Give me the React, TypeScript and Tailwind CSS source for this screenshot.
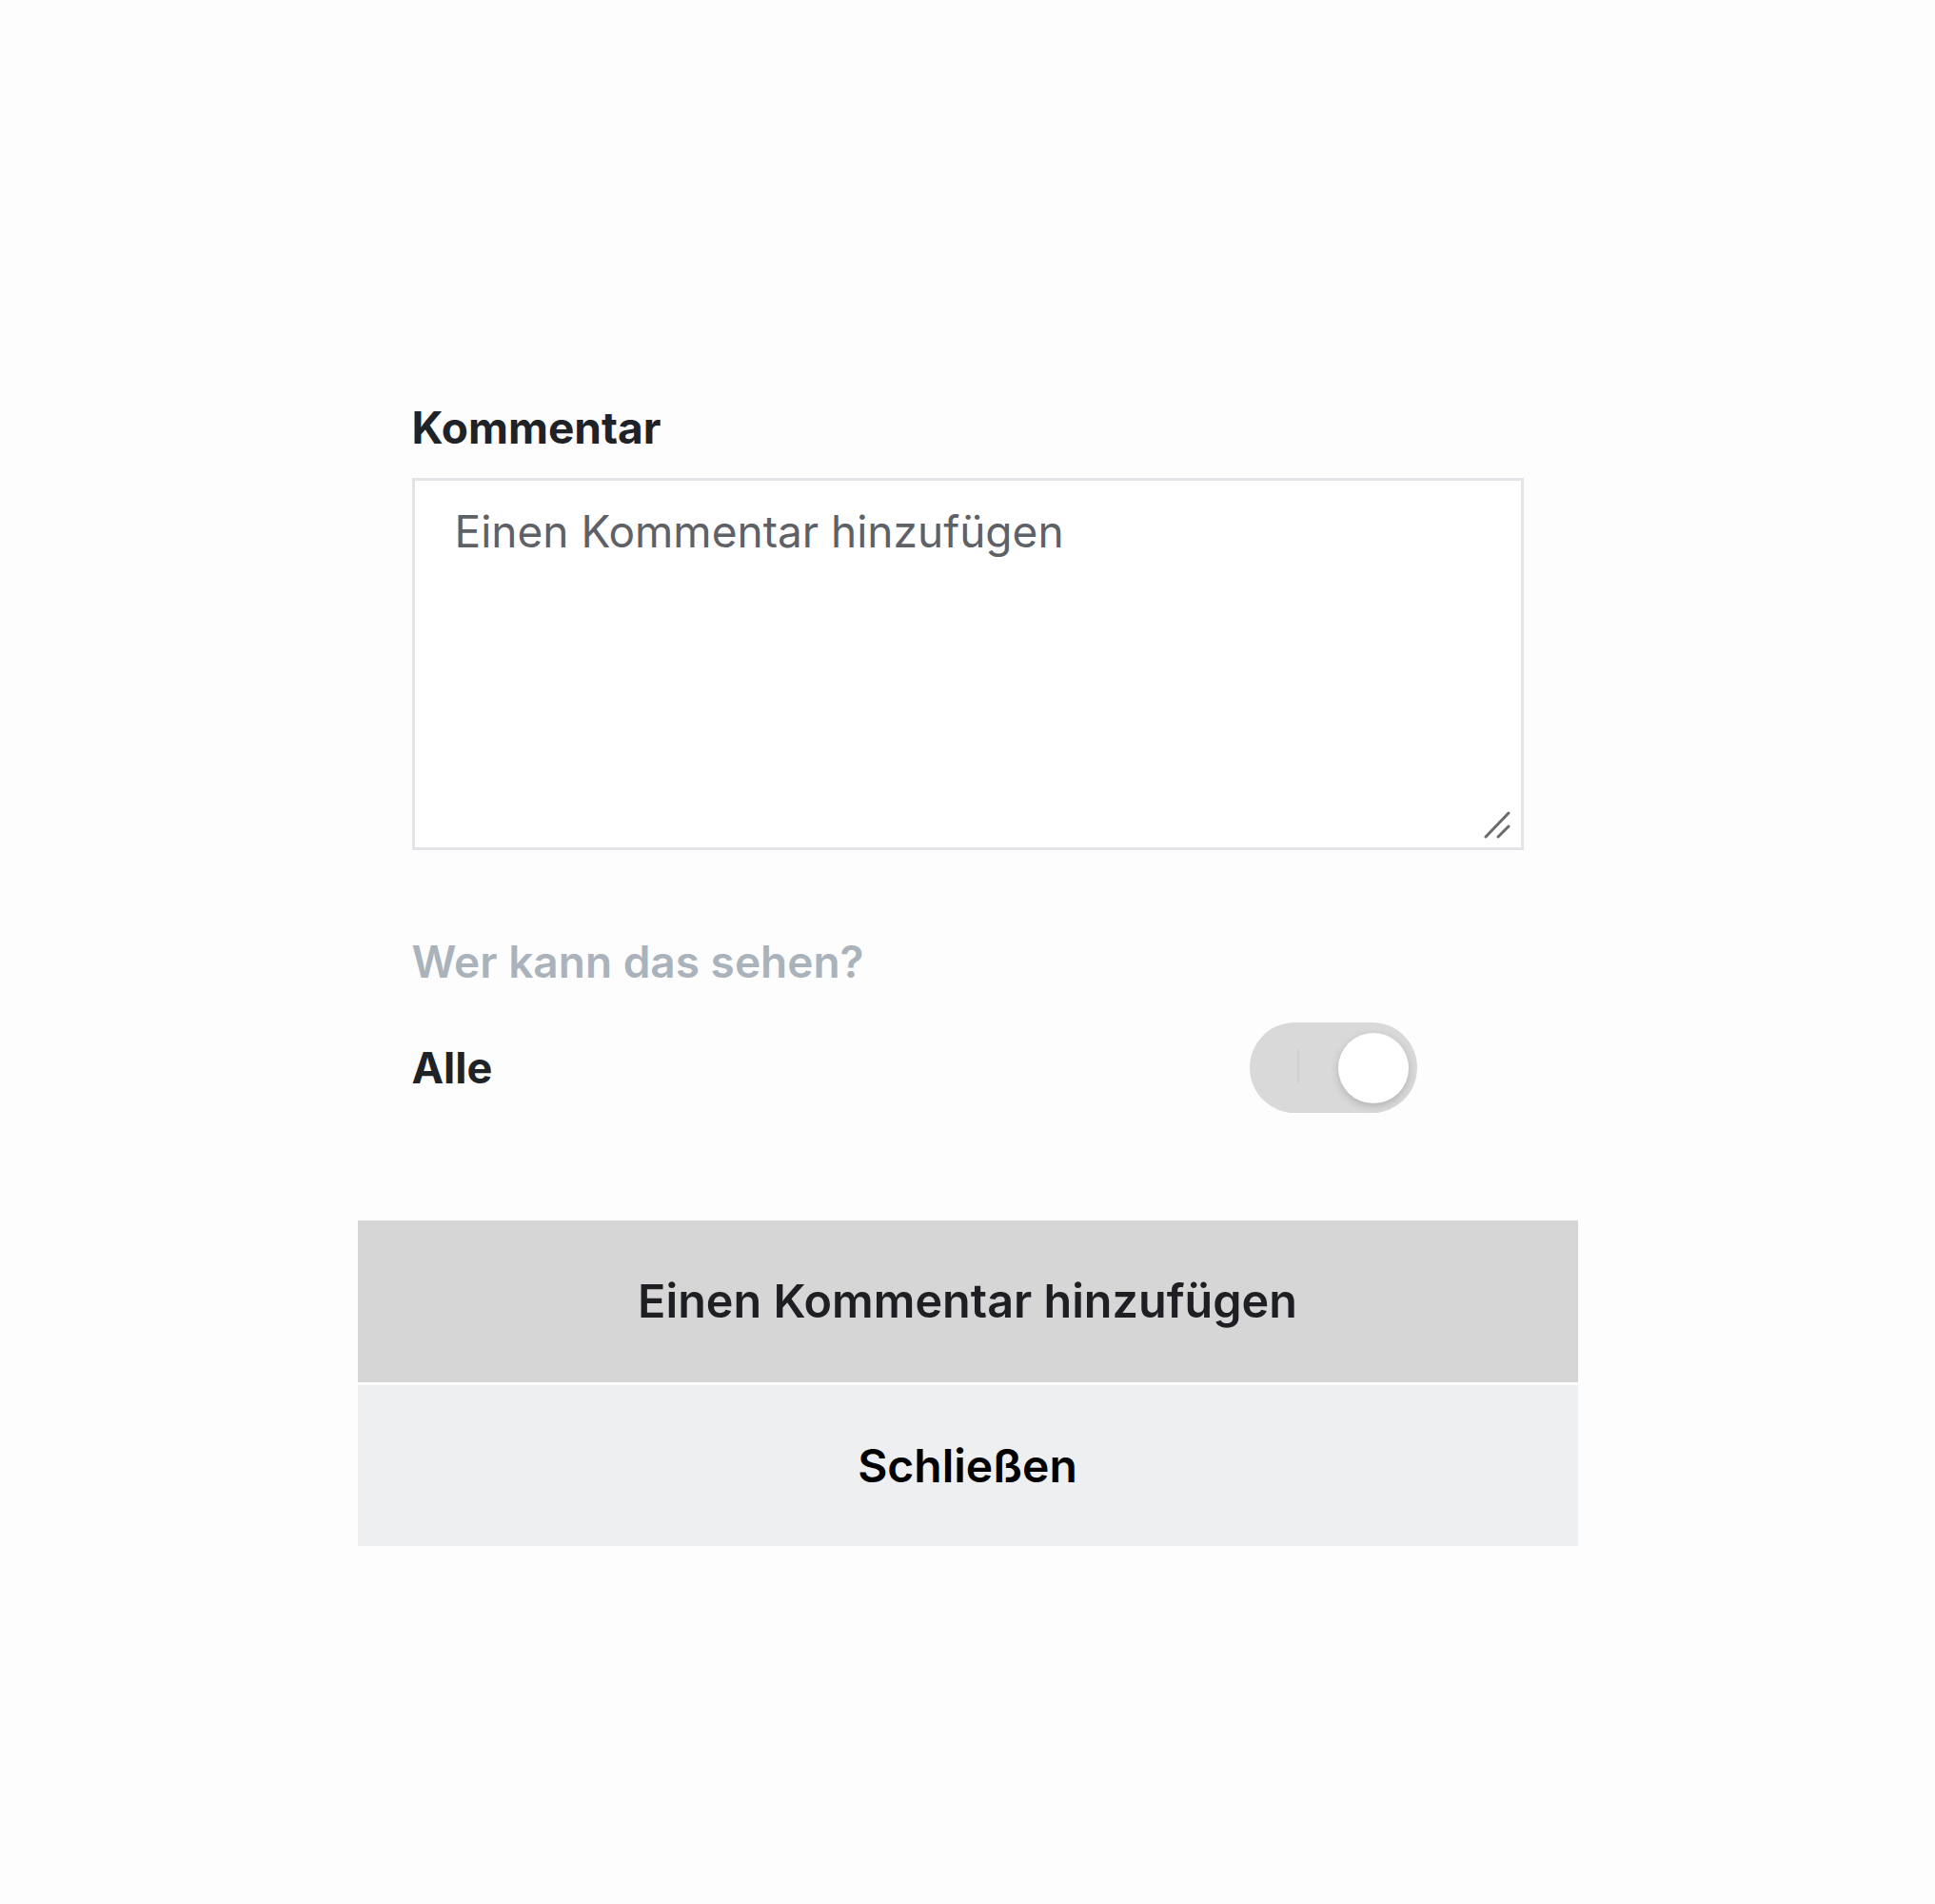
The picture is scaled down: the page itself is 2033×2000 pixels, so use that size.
import React, { useState } from "react"

const font = { fontFamily: "Inter, 'Noto Sans', sans-serif" }

function Toggle({ on, onChange }: { on: boolean; onChange: (v: boolean) => void }) {
  return (
    <button
      type="button"
      onClick={() => onChange(!on)}
      className="relative flex h-[95px] w-[176px] items-center rounded-full bg-[#d9d9d9]"
    >
      {/* faint "on" mark */}
      <span className="absolute left-[50px] top-[28px] h-[36px] w-[2px] bg-[#d1d1d1]" />
      <span
        className={
          on
            ? "absolute right-[9px] top-[11px] h-[74px] w-[74px] rounded-full bg-white shadow-[0_3px_8px_rgba(0,0,0,0.18)]"
            : "absolute left-[9px] top-[11px] h-[74px] w-[74px] rounded-full bg-white shadow-[0_3px_8px_rgba(0,0,0,0.18)]"
        }
      />
    </button>
  )
}

export default function App() {
  const [comment, setComment] = useState("")
  const [everyone, setEveryone] = useState(true)

  return (
    <div className="flex min-h-[2000px] w-full justify-center bg-[#fdfdfd]" style={font}>
      <div className="flex w-[1282px] flex-col pt-[420px]">
        <div className="flex flex-col px-[57px]">
          <label className="text-[46px] font-bold leading-[58px] text-[#1f2328]">Kommentar</label>

          <div className="relative mt-[24px]">
            <textarea
              value={comment}
              onChange={e => setComment(e.target.value)}
              placeholder="Einen Kommentar hinzufügen"
              className="block h-[391px] w-full resize-none border-[3px] border-[#e2e4e8] bg-white pl-[42px] pr-[40px] pt-[25px] text-[46px] leading-[1.25] text-[#1f2328] outline-none placeholder:text-[#5e6166]"
            />
            {/* resize grip */}
            <svg
              className="pointer-events-none absolute bottom-[12px] right-[14px]"
              width="30"
              height="30"
              viewBox="0 0 30 30"
            >
              <line x1="4" y1="28" x2="28" y2="3" stroke="#6b6b6b" strokeWidth="3" strokeLinecap="round" />
              <line x1="17" y1="28" x2="28" y2="17" stroke="#6b6b6b" strokeWidth="3" strokeLinecap="round" />
            </svg>
          </div>

          <div className="mt-[88px] text-[46px] font-semibold leading-[58px] text-[#aab3bc]">
            Wer kann das sehen?
          </div>

          <div className="mt-[35px] flex items-center justify-between pr-[112px]">
            <span className="text-[45px] font-bold text-[#1f2328]">Alle</span>
            <Toggle on={everyone} onChange={setEveryone} />
          </div>
        </div>

        <div className="mt-[113px] flex flex-col gap-[3px]">
          <button
            type="button"
            className="flex h-[170px] w-full items-center justify-center bg-[#d6d6d6] text-[48.5px] font-semibold text-[#1d1f22]"
          >
            Einen Kommentar hinzufügen
          </button>
          <button
            type="button"
            className="flex h-[169px] w-full items-center justify-center bg-[#eeeff1] text-[48px] font-semibold text-black"
          >
            Schließen
          </button>
        </div>
      </div>
    </div>
  )
}
